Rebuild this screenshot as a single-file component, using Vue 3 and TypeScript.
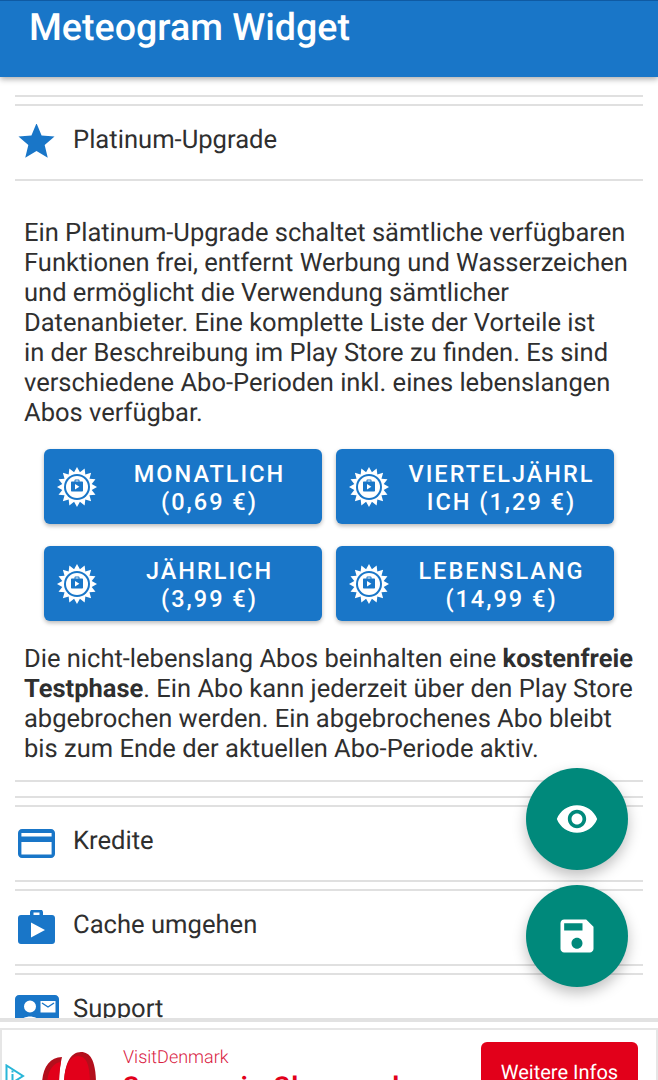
<script setup lang="ts">
const plans = [
  { label: 'MONATLICH (0,69 €)' },
  { label: 'VIERTELJÄHRLICH (1,29 €)' },
  { label: 'JÄHRLICH (3,99 €)' },
  { label: 'LEBENSLANG (14,99 €)' },
]

// spiky seal behind the plan icon
const sealPoints = Array.from({ length: 32 }, (_, i) => {
  const r = i % 2 === 0 ? 20 : 15
  const a = (i * Math.PI) / 16 - Math.PI / 2
  return `${(20 + r * Math.cos(a)).toFixed(2)},${(20 + r * Math.sin(a)).toFixed(2)}`
}).join(' ')
</script>

<template>
  <div class="page">
    <header class="appbar">
      <h1 class="title">Meteogram Widget</h1>
    </header>

    <main class="content">
      <div class="rule first"></div>
      <div class="rule gap7"></div>
      <div class="row">
        <svg class="row-icon" viewBox="0 1.300 24 24"><path d="M12 .8l3.300 7.900 8.400.7-6.400 5.500 2 8.300L12 18.800l-7.300 4.400 2-8.300L.3 9.400l8.400-.7z" /></svg>
        <span class="row-label">Platinum-Upgrade</span>
      </div>
      <div class="rule"></div>

      <p class="text intro">Ein Platinum-Upgrade schaltet sämtliche verfügbaren<br />Funktionen frei, entfernt Werbung und Wasserzeichen<br />und ermöglicht die Verwendung sämtlicher<br />Datenanbieter. Eine komplette Liste der Vorteile ist<br />in der Beschreibung im Play Store zu finden. Es sind<br />verschiedene Abo-Perioden inkl. eines lebenslangen<br />Abos verfügbar.</p>

      <div class="plans">
        <button v-for="p in plans" :key="p.label" class="plan">
          <svg class="seal" viewBox="0 0 40 40">
            <polygon :points="sealPoints" fill="#fff" />
            <circle cx="20" cy="20" r="13" fill="#1976c8" />
            <circle cx="20" cy="20" r="11" fill="#fff" />
            <path d="M17.500 14.500v-1.200c0-.5.4-.9.9-.9h3.200c.5 0 .9.4.9.9v1.200h2.500c.6 0 1 .4 1 1v8.100c0 .6-.4 1-1 1H15c-.6 0-1-.4-1-1v-8.100c0-.6.4-1 1-1zm1-1.100v1.100h3v-1.100z" fill="#1976c8" fill-rule="evenodd" />
            <path d="M18 17v5.400l4.400-2.700z" fill="#fff" />
          </svg>
          <span class="plan-label">{{ p.label }}</span>
        </button>
      </div>

      <p class="text outro">Die nicht-lebenslang Abos beinhalten eine <b>kostenfreie<br />Testphase</b>. Ein Abo kann jederzeit über den Play Store<br />abgebrochen werden. Ein abgebrochenes Abo bleibt<br />bis zum Ende der aktuellen Abo-Periode aktiv.</p>

      <div class="rule after-text"></div>
      <div class="rule gap14"></div>
      <div class="rule gap7"></div>
      <div class="row">
        <svg class="row-icon" viewBox="0 0 37 29"><path fill-rule="evenodd" d="M4 0h29c2.200 0 4 1.800 4 4v21c0 2.200-1.800 4-4 4H4c-2.200 0-4-1.800-4-4V4c0-2.200 1.800-4 4-4zm-.6 4v3.600h30.200V4zm0 9v12.400h30.200V13z" /></svg>
        <span class="row-label">Kredite</span>
      </div>
      <div class="rule"></div>
      <div class="rule gap7"></div>
      <div class="row">
        <svg class="row-icon" viewBox="0 1 37 35"><path fill-rule="evenodd" d="M12 6V3.500C12 1.600 13.600 0 15.500 0h6C23.400 0 25 1.600 25 3.500V6h9c1.700 0 3 1.300 3 3v23c0 1.700-1.300 3-3 3H3c-1.700 0-3-1.300-3-3V9c0-1.700 1.300-3 3-3zm3.500 0h6V3.500h-6zM13 13.500v15L27 21z" /></svg>
        <span class="row-label">Cache umgehen</span>
      </div>
      <div class="rule"></div>
      <div class="rule gap7"></div>
      <div class="row support">
        <svg class="row-icon contact" viewBox="0 0 44 32"><path fill-rule="evenodd" d="M4 0h36c2.200 0 4 1.800 4 4v24c0 2.200-1.800 4-4 4H4c-2.200 0-4-1.800-4-4V4c0-2.200 1.800-4 4-4zm11 5.500a6 6 0 1 0 0 12 6 6 0 0 0 0-12zM4 28c0-4 7-6.500 11-6.500S26 24 26 28zM25.500 6v11.500h15V6z" /><path d="M27 8l6 4 6-4" fill="none" stroke="#1976c8" stroke-width="1.400" /></svg>
        <span class="row-label">Support</span>
      </div>
    </main>

    <aside class="ad">
      <div class="ad-inner">
        <svg class="ad-choice" viewBox="0 0 20 24"><path d="M1.500 1.500v21L18 12z" fill="none" stroke="#29b6d8" stroke-width="2" /><path d="M7.500 10v9M7.500 6.500v2" stroke="#29b6d8" stroke-width="2" /></svg>
        <svg class="ad-logo" viewBox="0 0 56 34">
          <path d="M0 34C0 18 7 6 20 6c-2 8-3 18-3 28z" fill="#b30f1c" />
          <path d="M5 34C5 22 10 12 19 11c-1.500 8-2 14-2 23z" fill="#e2001a" />
          <path d="M22 34C22 14 28 1 39 1c10 0 15 10 15 33z" fill="#b30f1c" />
          <path d="M22 34C22 16 27 5 36 5c9 0 12 10 12 29z" fill="#e2001a" />
        </svg>
        <div class="ad-copy">
          <div class="ad-brand">VisitDenmark</div>
          <div class="ad-head">Sommer in Skagerrak</div>
        </div>
        <div class="ad-btn">Weitere Infos</div>
      </div>
    </aside>

    <button class="fab eye">
      <svg viewBox="0 0 24 24" width="44" height="44"><path fill="#fff" d="M12 4.500C7 4.500 2.730 7.610 1 12c1.730 4.390 6 7.500 11 7.500s9.270-3.110 11-7.500c-1.730-4.390-6-7.500-11-7.500zM12 17c-2.760 0-5-2.240-5-5s2.240-5 5-5 5 2.240 5 5-2.240 5-5 5zm0-8c-1.660 0-3 1.340-3 3s1.340 3 3 3 3-1.340 3-3-1.340-3-3-3z" /></svg>
    </button>
    <button class="fab save">
      <svg viewBox="0 0 24 24" width="44" height="44"><path fill="#fff" d="M17 3H5c-1.110 0-2 .9-2 2v14c0 1.100.89 2 2 2h14c1.100 0 2-.9 2-2V7l-4-4zm-5 16c-1.660 0-3-1.340-3-3s1.340-3 3-3 3 1.340 3 3-1.340 3-3 3zm3-10H5V5h10v4z" /></svg>
    </button>
  </div>
</template>

<style scoped>
.page {
  position: relative;
  width: 658px;
  height: 1080px;
  overflow: hidden;
  display: flex;
  flex-direction: column;
  background: #fff;
  font-family: Roboto, sans-serif;
  color: #2f2f2f;
  text-rendering: geometricPrecision;
}

.appbar {
  flex: none;
  height: 77px;
  box-sizing: border-box;
  padding: 8px 29px 0;
  background: #1976c8;
  border-top: 1px solid #0f5aa3;
  box-shadow: 0 2px 6px rgba(0, 0, 0, 0.35);
  z-index: 2;
}

.title {
  margin: 0;
  font-size: 37.600px;
  line-height: 38px;
  font-weight: 500;
  color: #fff;
}

.content {
  flex: 1;
  min-height: 0;
  overflow: hidden;
  padding: 0 15px;
}

.rule {
  height: 2px;
  background: #e0e0e0;
}
.first { margin-top: 18px; }
.gap7 { margin-top: 7px; }
.gap14 { margin-top: 14px; }
.after-text { margin-top: 16px; }

.row {
  height: 73px;
  display: flex;
  align-items: center;
}

.row-label {
  font-size: 25.600px;
  line-height: 30px;
  position: relative;
  top: -3px;
}

.row-icon {
  flex: none;
  width: 37px;
  margin: 0 18px 0 3px;
  fill: #1976c8;
}
.row-icon.contact {
  width: 44px;
  margin: 0 14px 0 0;
}
.support {
  height: 60px;
  align-items: flex-start;
  padding-top: 20px;
  box-sizing: border-box;
}
.support .row-label {
  top: -1px;
}

.text {
  margin: 0 0 0 9px;
  font-size: 25.500px;
  line-height: 30px;
  color: #2f2f2f;
  white-space: nowrap;
}
.text b { font-weight: 700; }
.intro { margin-top: 37px; }
.outro { margin-top: 23px; }

.plans {
  display: grid;
  grid-template-columns: 278px 278px;
  gap: 22px 14px;
  margin: 21px 0 0 29px;
}

.plan {
  height: 75px;
  padding: 0 0 0 13px;
  display: flex;
  align-items: center;
  border: 0;
  border-radius: 6px;
  background: #1976c8;
  box-shadow: 0 2px 4px rgba(0, 0, 0, 0.28);
  color: #fff;
  font-family: Roboto, sans-serif;
}

.seal {
  flex: none;
  width: 40px;
  height: 40px;
}

.plan-label {
  width: 192px;
  margin: 2px auto 0;
  text-align: center;
  overflow-wrap: break-word;
  font-size: 23.500px;
  line-height: 28px;
  font-weight: 500;
  letter-spacing: 2px;
}

.ad {
  flex: none;
  height: 62px;
  box-sizing: border-box;
  border-top: 4px solid #e2e2e2;
  padding-top: 6px;
  background: #fff;
  z-index: 1;
}

.ad-inner {
  height: 100%;
  box-sizing: border-box;
  border: 2px solid #e6e6e6;
  border-bottom: 0;
  display: flex;
  overflow: hidden;
  position: relative;
}

.ad-choice {
  position: absolute;
  left: 3px;
  top: 34px;
  width: 20px;
  height: 24px;
}

.ad-logo {
  width: 56px;
  height: 34px;
  margin: 21px 0 0 40px;
  flex: none;
}

.ad-copy {
  margin-left: 25px;
  padding-top: 17px;
}

.ad-brand {
  font-size: 18px;
  line-height: 22px;
  font-weight: 300;
  color: #d9213f;
}

.ad-head {
  margin-top: 1px;
  font-size: 26px;
  line-height: 34px;
  font-weight: 700;
  letter-spacing: 1.700px;
  color: #e2001a;
  white-space: nowrap;
}

.ad-btn {
  position: absolute;
  left: 479px;
  top: 12px;
  width: 157px;
  height: 60px;
  border-radius: 6px;
  background: #e2001a;
  color: #fff;
  font-size: 20px;
  line-height: 60px;
  text-align: center;
}

.fab {
  position: absolute;
  left: 526px;
  width: 102px;
  height: 102px;
  padding: 0;
  border: 0;
  border-radius: 50%;
  background: #00897b;
  box-shadow: 0 6px 14px rgba(0, 0, 0, 0.25);
  display: flex;
  align-items: center;
  justify-content: center;
  z-index: 3;
}
.eye { top: 768px; }
.save { top: 885px; }
</style>

<style>
html,
body {
  margin: 0;
  background: #fff;
}
</style>
